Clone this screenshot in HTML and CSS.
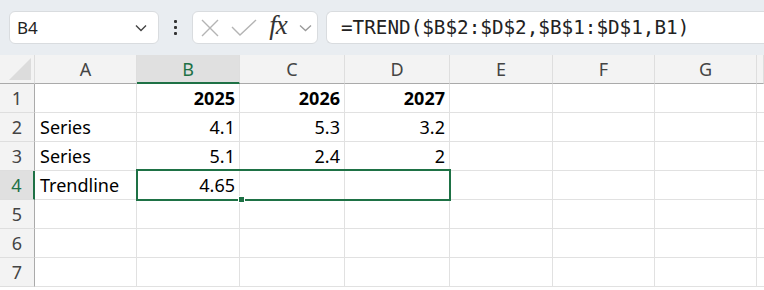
FILE: index.html
```html
<!DOCTYPE html>
<html lang="en">
<head>
  <meta charset="utf-8">
  <title>TREND</title>
  <link rel="stylesheet" href="styles.css">
</head>
<body>
  <div class="toolbar">
    <div class="namebox">
      <span>B4</span>
      <svg class="chev" width="12" height="8" viewBox="0 0 12 8"><path d="M1 1.5 6 6.5 11 1.5" fill="none" stroke="#444" stroke-width="1.4"/></svg>
    </div>
    <div class="dots"><i></i><i></i><i></i></div>
    <div class="fxbox">
      <svg width="18" height="18" viewBox="0 0 18 18"><path d="M1 1 17 17M17 1 1 17" stroke="#b4b4b4" stroke-width="1.4"/></svg>
      <svg width="26" height="18" viewBox="0 0 26 18"><path d="M1 8 9 16 25 1" fill="none" stroke="#b4b4b4" stroke-width="1.4"/></svg>
      <span class="fx">fx</span>
      <svg width="13" height="8" viewBox="0 0 13 8"><path d="M1 1.5 6.5 6.5 12 1.5" fill="none" stroke="#999" stroke-width="1.3"/></svg>
    </div>
    <div class="formula">=TREND($B$2:$D$2,$B$1:$D$1,B1)</div>
  </div>

  <div class="sheet">
    <div class="corner"><span></span></div>
    <div class="colh">A</div>
    <div class="colh sel">B</div>
    <div class="colh">C</div>
    <div class="colh">D</div>
    <div class="colh">E</div>
    <div class="colh">F</div>
    <div class="colh">G</div>
    <div class="colh"></div>

    <div class="rowh">1</div>
    <div class="c"></div><div class="c n b">2025</div><div class="c n b">2026</div><div class="c n b">2027</div><div class="c"></div><div class="c"></div><div class="c"></div><div class="c"></div>

    <div class="rowh">2</div>
    <div class="c">Series</div><div class="c n">4.1</div><div class="c n">5.3</div><div class="c n">3.2</div><div class="c"></div><div class="c"></div><div class="c"></div><div class="c"></div>

    <div class="rowh">3</div>
    <div class="c">Series</div><div class="c n">5.1</div><div class="c n">2.4</div><div class="c n">2</div><div class="c"></div><div class="c"></div><div class="c"></div><div class="c"></div>

    <div class="rowh sel">4</div>
    <div class="c">Trendline</div><div class="c n">4.65</div><div class="c"></div><div class="c"></div><div class="c"></div><div class="c"></div><div class="c"></div><div class="c"></div>

    <div class="rowh">5</div>
    <div class="c"></div><div class="c"></div><div class="c"></div><div class="c"></div><div class="c"></div><div class="c"></div><div class="c"></div><div class="c"></div>

    <div class="rowh">6</div>
    <div class="c"></div><div class="c"></div><div class="c"></div><div class="c"></div><div class="c"></div><div class="c"></div><div class="c"></div><div class="c"></div>

    <div class="rowh">7</div>
    <div class="c"></div><div class="c"></div><div class="c"></div><div class="c"></div><div class="c"></div><div class="c"></div><div class="c"></div><div class="c"></div>

    <div class="selection"><span class="handle"></span></div>
  </div>
</body>
</html>
```

FILE: styles.css
```css
* { margin: 0; padding: 0; box-sizing: border-box; }
body {
  font-family: "Noto Sans", "Open Sans", sans-serif;
  background: #fff; color: #000; overflow: hidden;
  width: 764px; height: 290px;
}

.toolbar {
  height: 55px; background: #e9edf1;
  display: flex; align-items: center;
  padding: 0 0 0 9px;
}
.namebox, .fxbox, .formula {
  height: 33px; background: #fff; border: 1px solid #d9dcdf; border-radius: 6px;
  display: flex; align-items: center;
}
.namebox { width: 150px; padding: 0 11px 0 7px; justify-content: space-between; font-size: 17px; color: #222; }
.dots { width: 33px; display: flex; flex-direction: column; align-items: center; gap: 3px; }
.dots i { width: 3px; height: 3px; background: #333; display: block; border-radius: 1px; }
.fxbox { width: 126px; padding: 0 5px 0 8px; justify-content: space-between; }
.fx {
  font-family: "Liberation Serif", "DejaVu Serif", serif; font-style: italic;
  font-size: 27px; color: #333; line-height: 1; margin-top: -4px; letter-spacing: -1px;
}
.formula {
  flex: 1; margin-left: 8px; border-right: none; border-radius: 6px 0 0 6px;
  padding-left: 14px;
  font-family: "DejaVu Sans Mono", "Liberation Mono", monospace; font-size: 19.3px; color: #222;
}

.sheet {
  display: grid;
  grid-template-columns: 35px 102px 103px 105px 105px 103px 102px 102px 7px;
  grid-template-rows: 29px repeat(7, 29px);
  position: relative;
}
.corner { background: #f3f3f3; border-bottom: 1px solid #aaa; border-right: 1px solid #ddd; position: relative; }
.corner span {
  position: absolute; right: 3px; bottom: 3px; width: 0; height: 0;
  border-left: 22px solid transparent; border-bottom: 22px solid #dcdcdc;
}
.colh {
  background: #f3f3f3; border-bottom: 1px solid #aaa; border-right: 1px solid #dedede;
  display: flex; align-items: center; justify-content: center;
  font-size: 18px; color: #444;
}
.colh.sel { background: #e0e0e0; color: #1e7145; border-bottom: 2px solid #1e7145; }
.rowh {
  background: #f3f3f3; border-bottom: 1px solid #dedede; border-right: 1px solid #aaa;
  display: flex; align-items: center; justify-content: center;
  font-size: 18px; color: #444;
}
.rowh.sel { background: #e0e0e0; color: #1e7145; border-right: 2px solid #1e7145; }
.c {
  border-right: 1px solid #e1e1e1; border-bottom: 1px solid #e1e1e1;
  display: flex; align-items: center; padding: 0 4px 0 5px;
  font-size: 18px; white-space: nowrap;
}
.c.n { justify-content: flex-end; }
.c.b { font-weight: bold; }
.selection {
  position: absolute; grid-column: 3 / 6; grid-row: 5 / 6;
  top: -2px; left: -1px; right: -1px; bottom: -1px;
  border: 2px solid #1e7145; pointer-events: none;
}
.handle {
  position: absolute; left: 100px; bottom: -4px; width: 7px; height: 7px;
  background: #1e7145; border: 1px solid #fff;
}
```
